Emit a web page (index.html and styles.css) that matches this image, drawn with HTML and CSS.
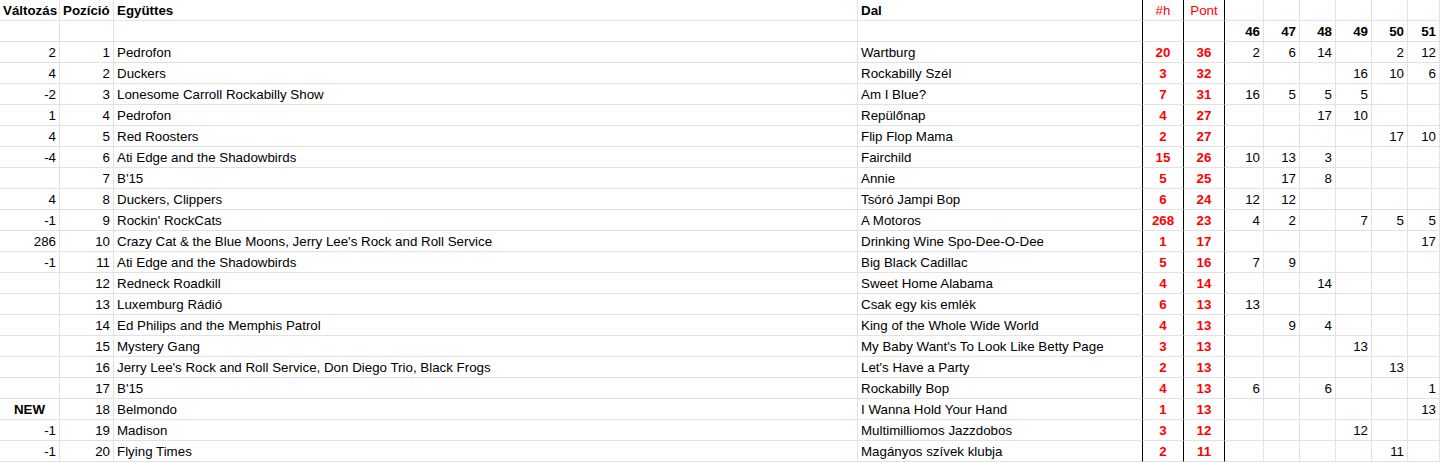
FILE: index.html
```html
<!DOCTYPE html>
<html lang="hu">
<head>
<meta charset="utf-8">
<title>Toplista</title>
<link rel="stylesheet" href="styles.css">
</head>
<body>
<div class="sheet">
  <div class="row">
    <div class="c b">Változás</div><div class="c b">Pozíció</div><div class="c b">Együttes</div><div class="c b k">Dal</div>
    <div class="c ctr hred k">#h</div><div class="c ctr hred k">Pont</div>
    <div class="c"></div><div class="c"></div><div class="c"></div><div class="c"></div><div class="c"></div><div class="c"></div>
  </div>
  <div class="row">
    <div class="c"></div><div class="c"></div><div class="c"></div><div class="c k"></div>
    <div class="c k"></div><div class="c k"></div>
    <div class="c r b">46</div><div class="c r b">47</div><div class="c r b">48</div><div class="c r b">49</div><div class="c r b">50</div><div class="c r b">51</div>
  </div>
  <div class="row">
    <div class="c r">2</div><div class="c r">1</div><div class="c">Pedrofon</div><div class="c k">Wartburg</div>
    <div class="c ctr red k">20</div><div class="c ctr red k">36</div>
    <div class="c r">2</div><div class="c r">6</div><div class="c r">14</div><div class="c r"></div><div class="c r">2</div><div class="c r">12</div>
  </div>
  <div class="row">
    <div class="c r">4</div><div class="c r">2</div><div class="c">Duckers</div><div class="c k">Rockabilly Szél</div>
    <div class="c ctr red k">3</div><div class="c ctr red k">32</div>
    <div class="c r"></div><div class="c r"></div><div class="c r"></div><div class="c r">16</div><div class="c r">10</div><div class="c r">6</div>
  </div>
  <div class="row">
    <div class="c r">-2</div><div class="c r">3</div><div class="c">Lonesome Carroll Rockabilly Show</div><div class="c k">Am I Blue?</div>
    <div class="c ctr red k">7</div><div class="c ctr red k">31</div>
    <div class="c r">16</div><div class="c r">5</div><div class="c r">5</div><div class="c r">5</div><div class="c r"></div><div class="c r"></div>
  </div>
  <div class="row">
    <div class="c r">1</div><div class="c r">4</div><div class="c">Pedrofon</div><div class="c k">Repülőnap</div>
    <div class="c ctr red k">4</div><div class="c ctr red k">27</div>
    <div class="c r"></div><div class="c r"></div><div class="c r">17</div><div class="c r">10</div><div class="c r"></div><div class="c r"></div>
  </div>
  <div class="row">
    <div class="c r">4</div><div class="c r">5</div><div class="c">Red Roosters</div><div class="c k">Flip Flop Mama</div>
    <div class="c ctr red k">2</div><div class="c ctr red k">27</div>
    <div class="c r"></div><div class="c r"></div><div class="c r"></div><div class="c r"></div><div class="c r">17</div><div class="c r">10</div>
  </div>
  <div class="row">
    <div class="c r">-4</div><div class="c r">6</div><div class="c">Ati Edge and the Shadowbirds</div><div class="c k">Fairchild</div>
    <div class="c ctr red k">15</div><div class="c ctr red k">26</div>
    <div class="c r">10</div><div class="c r">13</div><div class="c r">3</div><div class="c r"></div><div class="c r"></div><div class="c r"></div>
  </div>
  <div class="row">
    <div class="c r"></div><div class="c r">7</div><div class="c">B'15</div><div class="c k">Annie</div>
    <div class="c ctr red k">5</div><div class="c ctr red k">25</div>
    <div class="c r"></div><div class="c r">17</div><div class="c r">8</div><div class="c r"></div><div class="c r"></div><div class="c r"></div>
  </div>
  <div class="row">
    <div class="c r">4</div><div class="c r">8</div><div class="c">Duckers, Clippers</div><div class="c k">Tsóró Jampi Bop</div>
    <div class="c ctr red k">6</div><div class="c ctr red k">24</div>
    <div class="c r">12</div><div class="c r">12</div><div class="c r"></div><div class="c r"></div><div class="c r"></div><div class="c r"></div>
  </div>
  <div class="row">
    <div class="c r">-1</div><div class="c r">9</div><div class="c">Rockin' RockCats</div><div class="c k">A Motoros</div>
    <div class="c ctr red k">268</div><div class="c ctr red k">23</div>
    <div class="c r">4</div><div class="c r">2</div><div class="c r"></div><div class="c r">7</div><div class="c r">5</div><div class="c r">5</div>
  </div>
  <div class="row">
    <div class="c r">286</div><div class="c r">10</div><div class="c">Crazy Cat &amp; the Blue Moons, Jerry Lee's Rock and Roll Service</div><div class="c k">Drinking Wine Spo-Dee-O-Dee</div>
    <div class="c ctr red k">1</div><div class="c ctr red k">17</div>
    <div class="c r"></div><div class="c r"></div><div class="c r"></div><div class="c r"></div><div class="c r"></div><div class="c r">17</div>
  </div>
  <div class="row">
    <div class="c r">-1</div><div class="c r">11</div><div class="c">Ati Edge and the Shadowbirds</div><div class="c k">Big Black Cadillac</div>
    <div class="c ctr red k">5</div><div class="c ctr red k">16</div>
    <div class="c r">7</div><div class="c r">9</div><div class="c r"></div><div class="c r"></div><div class="c r"></div><div class="c r"></div>
  </div>
  <div class="row">
    <div class="c r"></div><div class="c r">12</div><div class="c">Redneck Roadkill</div><div class="c k">Sweet Home Alabama</div>
    <div class="c ctr red k">4</div><div class="c ctr red k">14</div>
    <div class="c r"></div><div class="c r"></div><div class="c r">14</div><div class="c r"></div><div class="c r"></div><div class="c r"></div>
  </div>
  <div class="row">
    <div class="c r"></div><div class="c r">13</div><div class="c">Luxemburg Rádió</div><div class="c k">Csak egy kis emlék</div>
    <div class="c ctr red k">6</div><div class="c ctr red k">13</div>
    <div class="c r">13</div><div class="c r"></div><div class="c r"></div><div class="c r"></div><div class="c r"></div><div class="c r"></div>
  </div>
  <div class="row">
    <div class="c r"></div><div class="c r">14</div><div class="c">Ed Philips and the Memphis Patrol</div><div class="c k">King of the Whole Wide World</div>
    <div class="c ctr red k">4</div><div class="c ctr red k">13</div>
    <div class="c r"></div><div class="c r">9</div><div class="c r">4</div><div class="c r"></div><div class="c r"></div><div class="c r"></div>
  </div>
  <div class="row">
    <div class="c r"></div><div class="c r">15</div><div class="c">Mystery Gang</div><div class="c k">My Baby Want's To Look Like Betty Page</div>
    <div class="c ctr red k">3</div><div class="c ctr red k">13</div>
    <div class="c r"></div><div class="c r"></div><div class="c r"></div><div class="c r">13</div><div class="c r"></div><div class="c r"></div>
  </div>
  <div class="row">
    <div class="c r"></div><div class="c r">16</div><div class="c">Jerry Lee's Rock and Roll Service, Don Diego Trio, Black Frogs</div><div class="c k">Let's Have a Party</div>
    <div class="c ctr red k">2</div><div class="c ctr red k">13</div>
    <div class="c r"></div><div class="c r"></div><div class="c r"></div><div class="c r"></div><div class="c r">13</div><div class="c r"></div>
  </div>
  <div class="row">
    <div class="c r"></div><div class="c r">17</div><div class="c">B'15</div><div class="c k">Rockabilly Bop</div>
    <div class="c ctr red k">4</div><div class="c ctr red k">13</div>
    <div class="c r">6</div><div class="c r"></div><div class="c r">6</div><div class="c r"></div><div class="c r"></div><div class="c r">1</div>
  </div>
  <div class="row">
    <div class="c ctr b">NEW</div><div class="c r">18</div><div class="c">Belmondo</div><div class="c k">I Wanna Hold Your Hand</div>
    <div class="c ctr red k">1</div><div class="c ctr red k">13</div>
    <div class="c r"></div><div class="c r"></div><div class="c r"></div><div class="c r"></div><div class="c r"></div><div class="c r">13</div>
  </div>
  <div class="row">
    <div class="c r">-1</div><div class="c r">19</div><div class="c">Madison</div><div class="c k">Multimilliomos Jazzdobos</div>
    <div class="c ctr red k">3</div><div class="c ctr red k">12</div>
    <div class="c r"></div><div class="c r"></div><div class="c r"></div><div class="c r">12</div><div class="c r"></div><div class="c r"></div>
  </div>
  <div class="row">
    <div class="c r">-1</div><div class="c r">20</div><div class="c">Flying Times</div><div class="c k">Magányos szívek klubja</div>
    <div class="c ctr red k">2</div><div class="c ctr red k">11</div>
    <div class="c r"></div><div class="c r"></div><div class="c r"></div><div class="c r"></div><div class="c r">11</div><div class="c r"></div>
  </div>
</div>
</body>
</html>
```
FILE: styles.css
```css
html, body {
  margin: 0;
  padding: 0;
  background: #ffffff;
}
.sheet {
  width: 1440px;
  font-family: "Liberation Sans", Arial, sans-serif;
  font-size: 13.33px;
  color: #000000;
}
.row {
  display: grid;
  grid-template-columns: 60px 54px 744px 285px 41px 41px 39px 36px 36px 36px 36px 1fr;
  height: 21px;
}
.c {
  box-sizing: border-box;
  height: 21px;
  border-right: 1px solid #e2e2e2;
  border-bottom: 1px solid #e2e2e2;
  padding: 1px 3px 0 3px;
  line-height: 19px;
  white-space: nowrap;
  overflow: hidden;
}
.r { text-align: right; }
.ctr { text-align: center; }
.b { font-weight: bold; }
.red { color: #ff0000; font-weight: bold; }
.hred { color: #ff0000; }
.k { border-right-color: #000000; }
```
